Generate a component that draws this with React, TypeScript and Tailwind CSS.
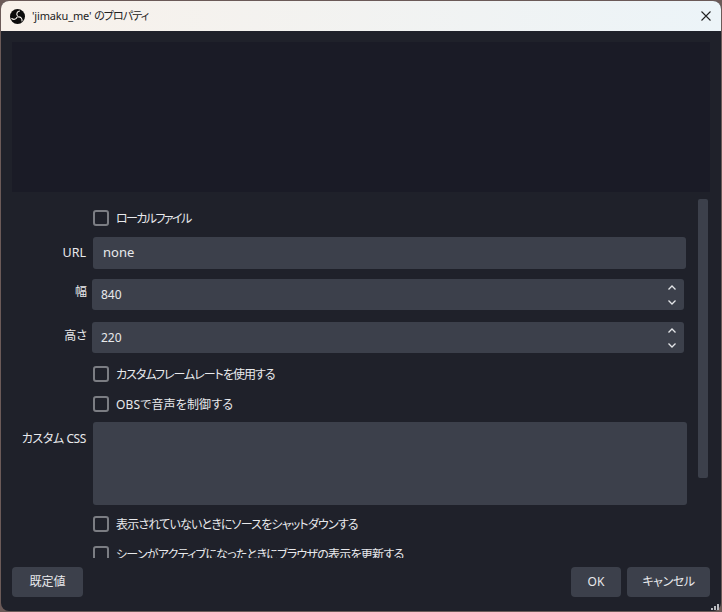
import React from "react";

const font = { fontFamily: '"Noto Sans", "Noto Sans CJK JP", sans-serif' };

function Logo() {
  return (
    <svg width="15" height="15" viewBox="0 0 30 30" className="shrink-0">
      <circle cx="15" cy="15" r="15" fill="#0c0c0c" />
      <g fill="none" stroke="#f7f3ee" strokeWidth="2.2" strokeLinecap="round">
        <path d="M15 14C12 10 14 5 19 4" />
        <path d="M16 16C21 15 25 19 24 24" />
        <path d="M14 16.500C12 21 7 22 3.500 19" />
      </g>
    </svg>
  );
}

function Check({ label, className, tracking }: { label: string; className: string; tracking: string }) {
  return (
    <div className={`flex items-center gap-[7px] h-4 pl-[92px] ${className}`}>
      <span className="w-4 h-4 shrink-0 rounded-[3px] border-2 border-[#7b7d83]" />
      <span className={`text-[12px] leading-4 pt-[1px] text-[#e8e9ec] whitespace-nowrap [font-feature-settings:'palt'] ${tracking}`}>{label}</span>
    </div>
  );
}

function Chevrons() {
  return (
    <svg width="8" height="20" viewBox="0 0 8 20" fill="none" stroke="#e4e5e8" strokeWidth="1.3">
      <path d="M.5 4.500 4 1 7.500 4.500" />
      <path d="M.5 15.500 4 19 7.500 15.500" />
    </svg>
  );
}

function Spin({ label, value, className, labelClass }: { label: string; value: string; className: string; labelClass: string }) {
  return (
    <div className={`flex ${className}`}>
      <div className={`w-[86px] shrink-0 text-right text-[12px] leading-4 text-[#e8e9ec] [font-feature-settings:'palt'] ${labelClass}`}>{label}</div>
      <div className="ml-[5px] w-[592px] h-[31px] rounded-[3px] bg-[#3c404b] flex items-center justify-between pl-[9px] pr-[8px]">
        <span className="text-[12px] text-[#e8e9ec]">{value}</span>
        <Chevrons />
      </div>
    </div>
  );
}

function Btn({ label, className }: { label: string; className: string }) {
  return (
    <div className={`h-[30px] rounded-[4px] bg-[#3c404b] flex items-center justify-center text-[12px] text-[#e8e9ec] [font-feature-settings:'palt'] ${className}`}>
      {label}
    </div>
  );
}

export default function App() {
  return (
    <div className="relative w-[722px] h-[612px] bg-[#6b5a58] pl-[1px] pt-[1px] overflow-hidden" style={font}>
      <div className="w-[720px] h-[610px] rounded-[8px] overflow-hidden flex flex-col bg-[#1f212a]">
        <div className="h-[30px] shrink-0 flex items-center bg-gradient-to-r from-[#f8f1ea] to-[#ecf4f8] pl-[9px] pr-[9px]">
          <Logo />
          <span className="ml-[7px] text-[11px] tracking-[-0.15px] text-[#222] whitespace-nowrap [font-feature-settings:'palt']">
            'jimaku_me' <span className="tracking-[-0.9px]">のプロパティ</span>
          </span>
          <svg width="10" height="10" viewBox="0 0 10 10" className="ml-auto mr-[1px]" stroke="#222" strokeWidth="1.1" fill="none">
            <path d="M.5.5l9 9M9.500.5l-9 9" />
          </svg>
        </div>
        <div className="h-[150px] shrink-0 mt-[11px] ml-[11px] mr-[11px] bg-[#1a1b26]" />
        <div className="h-[366px] shrink-0 flex overflow-hidden">
          <div className="w-[697px] shrink-0 overflow-hidden">
            <Check label="ローカルファイル" tracking="tracking-[-1.6px]" className="mt-[18px]" />
            <div className="flex mt-[11px]">
              <div className="w-[85px] shrink-0 pt-[8px] text-right text-[12.5px] leading-4 text-[#e8e9ec]">URL</div>
              <div className="ml-[7px] w-[593px] h-[32px] rounded-[3px] bg-[#3c404b] flex items-center pl-[10px] text-[13px] text-[#e8e9ec]">
                none
              </div>
            </div>
            <Spin label="幅" value="840" className="mt-[10px]" labelClass="pt-[5px]" />
            <Spin label="高さ" value="220" className="mt-[12px]" labelClass="pt-[6px]" />
            <Check label="カスタムフレームレートを使用する" tracking="tracking-[-1px]" className="mt-[13px]" />
            <Check label="OBSで音声を制御する" tracking="tracking-[0.15px]" className="mt-[14px]" />
            <div className="flex mt-[10px]">
              <div className="w-[85px] shrink-0 pt-[9px] text-right text-[12px] leading-4 text-[#e8e9ec] whitespace-nowrap [font-feature-settings:'palt'] tracking-[-0.4px]">カスタム CSS</div>
              <div className="ml-[7px] w-[594px] h-[83px] rounded-[3px] bg-[#3c404b]" />
            </div>
            <Check label="表示されていないときにソースをシャットダウンする" tracking="tracking-[-0.8px]" className="mt-[11px]" />
            <Check label="シーンがアクティブになったときにブラウザの表示を更新する" tracking="tracking-[-0.75px]" className="mt-[14px]" />
          </div>
          <div className="w-[10px] h-[279px] mt-[7px] rounded-[2px] bg-[#3c404b]" />
        </div>
        <div className="flex items-start mt-[9px] ml-[11px] mr-[11px]">
          <Btn label="既定値" className="w-[71px]" />
          <Btn label="OK" className="w-[50px] ml-auto" />
          <Btn label="キャンセル" className="w-[83px] ml-[6px] tracking-[-0.4px]" />
        </div>
      </div>
      <svg width="8" height="6" viewBox="0 0 8 6" fill="#b9bbc0" className="absolute left-[711px] top-[604px]">
        <rect x="6" y="0" width="2" height="2" />
        <rect x="3" y="2" width="2" height="2" />
        <rect x="6" y="2" width="2" height="2" />
        <rect x="0" y="4" width="2" height="2" />
        <rect x="3" y="4" width="2" height="2" />
        <rect x="6" y="4" width="2" height="2" />
      </svg>
    </div>
  );
}
